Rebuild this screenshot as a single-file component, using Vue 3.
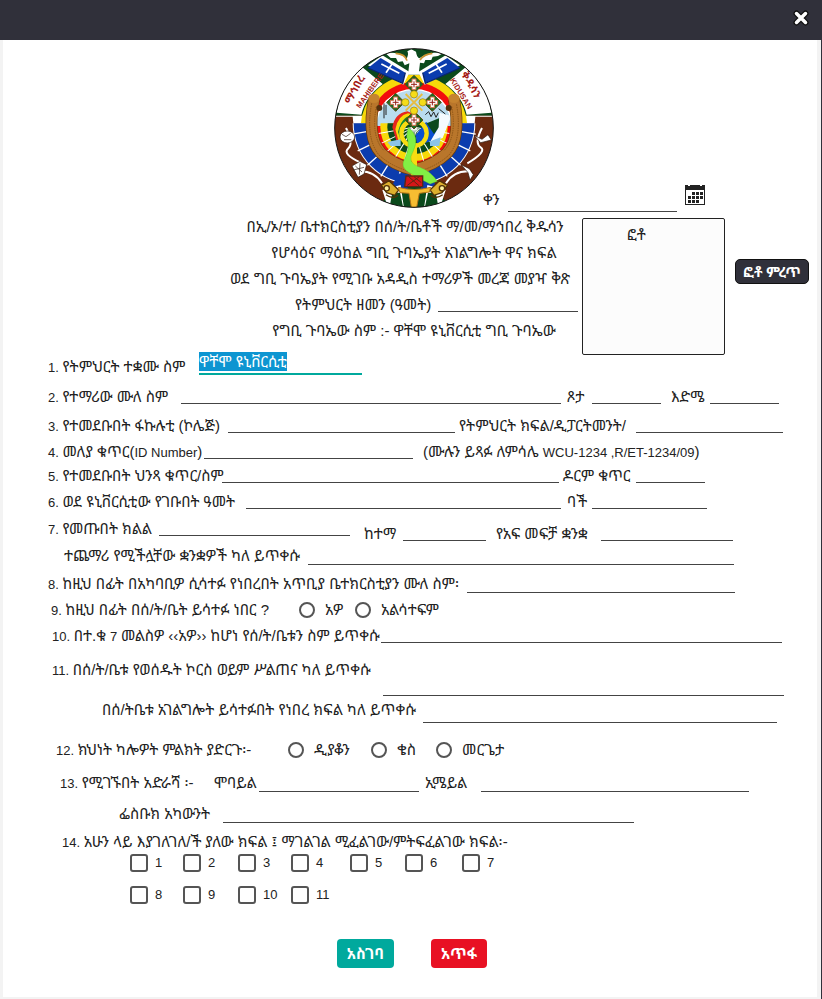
<script setup>
import { h, onMounted, reactive, ref } from 'vue'

const values = reactive({ school: 'ዋቸሞ ዩኒቨርሲቲ' })
const served = ref('')
const rank = ref('')
const groups = ref([])
const root = ref(null)

// Latin letters and digits are set one step smaller than the Ethiopic text.
const Mixed = (props) =>
  props.text
    .split(/([A-Za-z0-9][A-Za-z0-9 ,./-]*)/)
    .filter(Boolean)
    .map((part) => (/^[A-Za-z0-9]/.test(part) ? h('span', { 'data-latin': '' }, part) : part))
Mixed.props = ['text']

const L = (text, id, cls = '') => ({ text, id, cls })
const I = (id, cls = '') => ({ input: true, id, cls })

const upper = [
  { cls: 'r1', cells: [L('1. የትምህርት ተቋሙ ስም', 'school'), I('school', 'active')] },
  { cls: 'r2', cells: [L('2. የተማሪው ሙለ ስም', 'name'), I('name'), L('ጾታ', 'sex', 'in6'), I('sex'), L('እድሜ', 'age', 'in10'), I('age')] },
  { cls: 'r3', cells: [L('3. የተመደቡበት ፋኩሉቲ (ኮሌጅ)', 'faculty'), I('faculty'), L('የትምህርት ክፍል/ዲፓርትመንት/', 'dept', 'in4'), I('dept')] },
  { cls: 'r4', cells: [L('4. መለያ ቁጥር(ID Number)', 'idno'), I('idno'), L('(ሙሉን ይጻፉ ለምሳሌ WCU-1234 ,R/ET-1234/09)', 'idno', 'in10')] },
  { cls: 'r5', cells: [L('5. የተመደቡበት ህንጻ ቁጥር/ስም', 'block'), I('block'), L('ዶርም ቁጥር', 'dorm', 'in4'), I('dorm')] },
  { cls: 'r6', cells: [L('6. ወደ ዩኒቨርሲቲው የገቡበት ዓመት', 'year'), I('year'), L('ባች', 'batch', 'in6'), I('batch')] },
  { cls: 'r7', cells: [L('7. የመጡበት ክልል', 'region'), I('region'), L('ከተማ', 'city', 'in14 low'), I('city', 'low'), L('የአፍ መፍቻ ቋንቋ', 'tongue', 'in10 low'), I('tongue', 'low')] },
  { cls: 'r7b', cells: [L('ተጨማሪ የሚችሏቸው ቋንቋዎች ካለ ይጥቀሱ', 'langs'), I('langs', 'mid')] },
  { cls: 'r8', cells: [L('8. ከዚህ በፊት በአካባቢዎ ሲሳተፉ የነበረበት አጥቢያ ቤተክርስቲያን ሙለ ስም፡', 'church'), I('church', 'mid')] }
]
const middle = [
  { cls: 'r10', cells: [L('10. በተ.ቁ 7 መልስዎ ‹‹አዎ›› ከሆነ የሰ/ት/ቤቱን ስም ይጥቀሱ', 'sunday'), I('sunday')] },
  { cls: 'r11', cells: [L('11. በሰ/ት/ቤቱ የወሰዱት ኮርስ ወይም ሥልጠና ካለ ይጥቀሱ', 'course'), I('course', 'far')] },
  { cls: 'r11b', cells: [L('በሰ/ትቤቱ አገልግሎት ይሳተፉበት የነበረ ክፍል ካለ ይጥቀሱ', 'service'), I('service', 'deep')] }
]
const lower = [
  { cls: 'r13', cells: [L('13. የሚገኙበት አድራሻ ፡-', 'mobile'), L('ሞባይል', 'mobile'), I('mobile', 'mid'), L('ኢሜይል', 'email', 'in6'), I('email', 'mid')] },
  { cls: 'r13b', cells: [L('ፌስቡክ አካውንት', 'facebook'), I('facebook', 'mid')] }
]
const numbers = [1, 2, 3, 4, 5, 6, 7, 8, 9, 10, 11]
const diamonds = [[270, 133], [215, 187], [325, 187], [270, 240]]
const rays = [-80, -64, -48, -32, -16, 0, 16, 32, 48, 64, 80]
const dots = [[8, 8], [12, 8], [16, 8], [4, 12], [8, 12], [12, 12], [16, 12], [4, 16], [8, 16], [12, 16]]

onMounted(() => {
  const el = root.value.querySelector('#school')
  el.focus()
  el.select()
})
</script>

<template>
  <div ref="root" class="window">
    <header class="bar">
      <button class="close" type="button" aria-label="Close">
        <svg viewBox="0 0 18 18" width="18" height="18">
          <path d="M4.500 4.500 13.500 13.500M13.500 4.500 4.500 13.500" stroke="#111" stroke-width="6" stroke-linecap="round" />
          <path d="M4.500 4.500 13.500 13.500M13.500 4.500 4.500 13.500" stroke="#fff" stroke-width="3.500" stroke-linecap="round" />
        </svg>
      </button>
    </header>

    <form class="sheet" @submit.prevent>
      <div class="top">
        <svg class="logo" viewBox="30 24 480 480">
          <defs>
            <clipPath id="disc"><circle cx="270" cy="264" r="238" /></clipPath>
            <clipPath id="lowerhalf"><rect x="30" y="250" width="480" height="260" /></clipPath>
            <clipPath id="upperhalf"><rect x="30" y="20" width="480" height="230" /></clipPath>
            <clipPath id="core"><circle cx="270" cy="262" r="112" /></clipPath>
          </defs>
          <g clip-path="url(#disc)">
            <rect x="30" y="24" width="480" height="480" fill="#6b2a10" />
            <rect x="30" y="24" width="480" height="203" fill="#0b4a1c" />
            <path d="M38 218Q48 140 108 76L176 132Q124 170 112 224Z" fill="#fff" />
            <path d="M502 218Q492 140 432 76L364 132Q416 170 428 224Z" fill="#fff" />
            <path d="M30 227H126V250H88L86 230H30ZM510 227H414V250H452L454 230H510Z" fill="#fff" />
            <g clip-path="url(#upperhalf)">
              <circle cx="270" cy="264" r="160" fill="#f7d90a" />
              <circle cx="270" cy="264" r="137" fill="#f20d0d" />
              <circle cx="270" cy="264" r="118" fill="#fff" />
            </g>
            <g clip-path="url(#lowerhalf)">
              <circle cx="270" cy="250" r="184" fill="#fff" />
              <circle cx="270" cy="250" r="181" fill="#0b3cae" />
              <path v-for="a in rays" :key="a" d="M270 250V438" :transform="`rotate(${a} 270 250)`" stroke="#fff" stroke-width="4" />
              <circle cx="270" cy="250" r="122" fill="#f20d0d" />
            </g>
            <g clip-path="url(#core)">
              <rect x="150" y="140" width="240" height="120" fill="#b9dcef" />
              <path d="M158 258H382V380H158Z" fill="#f20d0d" />
              <circle cx="270" cy="262" r="101" fill="#f7d90a" clip-path="url(#lowerhalf)" />
              <circle cx="270" cy="262" r="80" fill="#0b4a1c" clip-path="url(#lowerhalf)" />
              <path v-for="a in rays" :key="'c' + a" d="M270 262V370" :transform="`rotate(${a} 270 262)`" stroke="#fff" stroke-width="3" />
              <path d="M205 262Q212 220 250 214L276 224Q232 238 222 318Z" fill="#e6271f" />
              <path d="M214 268Q222 226 252 220L272 226Q236 240 226 312Z" fill="#f7d90a" />
              <path d="M222 276Q232 232 262 226Q238 250 232 306Z" fill="#128a35" />
              <path d="M275 285 306 246 334 262 346 288 318 304 280 318Z" fill="#0b4fd0" />
              <path d="M308 250 352 232 346 260 330 282Z" fill="#0b4a1c" />
              <path d="M346 218 382 228 356 294 318 306 344 262Z" fill="#f5fbff" />
              <path d="M190 306 230 298V318H200ZM318 304 350 292 346 318H318Z" fill="#8cc4e8" />
            </g>
            <path d="M150 178Q128 292 170 338Q206 374 270 390Q334 374 370 338Q412 292 390 178" fill="none" stroke="#6a3d08" stroke-width="36" />
            <path d="M150 178Q128 292 170 338Q206 374 270 390Q334 374 370 338Q412 292 390 178" fill="none" stroke="#b9762b" stroke-width="32" />
            <path d="M143 190Q124 292 164 344Q204 382 270 398Q336 382 376 344Q416 292 397 190M157 200Q140 290 180 332M383 200Q400 290 360 332" fill="none" stroke="#8b5417" stroke-width="3" stroke-dasharray="4 3" />
            <ellipse cx="150" cy="175" rx="17" ry="14" fill="#c5832f" /><ellipse cx="390" cy="175" rx="17" ry="14" fill="#c5832f" />
            <circle cx="166" cy="204" r="9" fill="#54300c" /><circle cx="374" cy="204" r="9" fill="#54300c" />
            <path d="M180 190V235M186 195V225" stroke="#222" stroke-width="3" />
            <path d="M132 76 175 46 257 96 238 134Z" fill="#fff" /><path d="M132 84 170 54 244 98 236 130Z" fill="#0b3cae" /><path d="M132 84 236 130 244 98" fill="none" stroke="#09256d" stroke-width="4" />
            <path d="M408 76 365 46 283 96 302 134Z" fill="#fff" /><path d="M408 84 370 54 296 98 304 130Z" fill="#0b3cae" /><path d="M408 84 304 130 296 98" fill="none" stroke="#09256d" stroke-width="4" />
            <path d="M172 72 226 100M204 72 186 98M368 72 314 100M336 72 354 98" stroke="#fff" stroke-width="5" />
            <path d="M183 38Q230 35 248 56Q255 42 250 34L262 28 276 35Q278 50 286 55Q315 34 360 38L342 48 326 50 322 60 304 60 300 70 288 68 285 94 292 104H252L256 70 242 76 236 64 222 66 216 54 200 54Z" fill="#fff" />
            <path d="M215 40Q244 42 249 62M325 40Q300 42 288 60" fill="none" stroke="#c8912f" stroke-width="5" />
            <path d="M66 264Q90 310 72 326T110 368M474 264Q450 310 470 322T430 370M100 394Q150 390 174 430M440 394Q390 390 366 430" fill="none" stroke="#fff" stroke-width="6" />
            <g fill="#fff" stroke="#2b160d" stroke-width="2">
              <ellipse cx="70" cy="291" rx="22" ry="18" /><path d="M54 283 66 290 80 280M60 299H82" />
              <path d="M84 378 108 364 128 374 120 402 102 412Z" /><path d="M94 378 114 396M108 370 106 404M88 390 120 382" />
              <path d="M450 286 470 308 502 300 492 284 474 298Z" /><path d="M412 374 432 398 438 420 448 404 436 386Z" />
            </g>
            <path d="M160 504 222 430H320L382 504Z" fill="#0b4a1c" />
            <path d="M198 448 224 400 242 406 252 448ZM342 448 316 400 300 406 290 448Z" fill="#0b3cae" />
            <path d="M175 450 230 435 240 504H192ZM365 450 310 435 300 504H348Z" fill="#fff" />
            <path d="M205 458H228L238 504H196ZM335 458H312L302 504H344Z" fill="#0b4a1c" />
            <g fill="#ddb02e" stroke="#513208" stroke-width="4">
              <path d="M172 436 195 422 224 450 212 466 188 458ZM370 436 346 422 318 450 330 466 354 458Z" />
              <path d="M186 464Q208 480 222 466M356 464Q334 480 320 466" fill="none" />
              <circle cx="188" cy="445" r="8" fill="#fff2a0" /><circle cx="354" cy="445" r="8" fill="#fff2a0" />
            </g>
            <circle cx="270" cy="280" r="38" fill="none" stroke="#f7dc12" stroke-width="13" />
            <path d="M262 310V410H279V310Z" fill="#f7dc12" />
            <path d="M252 262Q290 290 267 335Q246 368 288 382Q320 394 340 424L318 432Q290 418 256 398Q226 382 243 354Q260 318 248 290Z" fill="#82f044" stroke="#51be28" />
            <path d="M246 408H296V440H242Z" fill="#d51618" stroke="#5d2712" stroke-width="4" />
            <path d="M254 410 286 438M270 410 292 428M286 410 250 436" stroke="#5d2712" stroke-width="3" />
            <path d="M223 442Q270 455 320 442L316 456 286 460 278 502H262L255 460 228 458Z" fill="#f6bd32" stroke="#b47316" stroke-width="3" />
            <g v-for="d in diamonds" :key="d.join()" :transform="`translate(${d[0]} ${d[1]})`">
              <path d="M0-27 27 0 0 27-27 0Z" fill="#186b23" stroke="#5b4a12" stroke-width="3" />
              <path d="M-6-16H6V-6H16V6H6V16H-6V6H-16V-6H-6Z" fill="#fff" stroke="#d66d48" stroke-width="3" />
              <path d="M0-9V9M-9 0H9" stroke="#982019" stroke-width="3" />
            </g>
            <path d="M245 162 295 212M295 162 245 212" stroke="#e6bd45" stroke-width="6" />
            <g fill="#f5dc19" stroke="#9b7d11" stroke-width="2">
              <circle cx="270" cy="163" r="11" /><circle cx="244" cy="187" r="11" /><circle cx="296" cy="187" r="11" /><circle cx="270" cy="212" r="11" />
            </g>
            <path d="M304 224 314 215 321 230 329 216 336 232 343 218M344 206 364 222" stroke="#222" stroke-width="3" fill="none" />
            <g class="seal">
              <text transform="translate(80 194) rotate(-62)" font-size="32">ማኅበረ</text>
              <text transform="translate(108 206) rotate(-54)" font-size="23">MAHIBERE</text>
              <text transform="translate(377 120) rotate(58)" font-size="23">KIDUSAN</text>
              <text transform="translate(410 102) rotate(60)" font-size="32">ቅዱሳን</text>
            </g>
          </g>
          <circle cx="270" cy="264" r="238" fill="none" stroke="#151515" stroke-width="3" />
        </svg>
        <div class="date">
          <label for="date">ቀን</label>
          <input id="date" type="text" />
          <button class="cal" type="button" aria-label="Calendar">
            <svg viewBox="0 0 20 20" width="20" height="20">
              <path d="M0 0H20V20H0Z" fill="#222" /><path d="M1 5H19V19H1Z" fill="#fff" />
              <path d="M3 0H5V1H3ZM15 0H17V1H15Z" fill="#fff" />
              <rect v-for="p in dots" :key="p.join()" :x="p[0] - 1" :y="p[1] - 1" width="3" height="3" fill="#222" />
            </svg>
          </button>
        </div>
      </div>

      <div class="intro">
        <div class="titles">
          <p>በኢ/ኦ/ተ/ ቤተክርስቲያን በሰ/ት/ቤቶች ማ/መ/ማኅበረ ቅዱሳን</p>
          <p class="shift">የሆሳዕና ማዕከል ግቢ ጉባኤያት አገልግሎት ዋና ክፍል</p>
          <p class="back">ወደ ግቢ ጉባኤያት የሚገቡ አዳዲስ ተማሪዎች መረጃ መያዣ ቅጽ</p>
          <div class="term"><label for="term">የትምህርት ዘመን (ዓመት)</label><input id="term" type="text" /></div>
          <p class="shift">የግቢ ጉባኤው ስም :- ዋቸሞ ዩኒቨርሲቲ ግቢ ጉባኤው</p>
        </div>
        <div class="photo">ፎቶ</div>
        <button class="pick" type="button">ፎቶ ምረጥ</button>
      </div>

      <div v-for="row in upper" :key="row.cls" class="row" :class="row.cls">
        <template v-for="(c, i) in row.cells" :key="i">
          <input v-if="c.input" :id="c.id" v-model="values[c.id]" type="text" :class="c.cls" />
          <label v-else :for="c.id" :class="c.cls"><Mixed :text="c.text" /></label>
        </template>
      </div>

      <div class="row r9" role="radiogroup" aria-labelledby="q9">
        <span id="q9"><Mixed text="9. ከዚህ በፊት በሰ/ት/ቤት ይሳተፉ ነበር ?" /></span>
        <label class="opt"><input v-model="served" type="radio" name="served" value="yes" />አዎ</label>
        <label class="opt"><input v-model="served" type="radio" name="served" value="no" />አልሳተፍም</label>
      </div>

      <div v-for="row in middle" :key="row.cls" class="row" :class="row.cls">
        <template v-for="(c, i) in row.cells" :key="i">
          <input v-if="c.input" :id="c.id" v-model="values[c.id]" type="text" :class="c.cls" />
          <label v-else :for="c.id" :class="c.cls"><Mixed :text="c.text" /></label>
        </template>
      </div>

      <div class="row r12" role="radiogroup" aria-labelledby="q12">
        <span id="q12"><Mixed text="12. ክህነት ካሎዎት ምልክት ያድርጉ፡-" /></span>
        <label class="opt"><input v-model="rank" type="radio" name="rank" value="deacon" />ዲያቆን</label>
        <label class="opt"><input v-model="rank" type="radio" name="rank" value="priest" />ቄስ</label>
        <label class="opt"><input v-model="rank" type="radio" name="rank" value="merigeta" />መርጌታ</label>
      </div>

      <div v-for="row in lower" :key="row.cls" class="row" :class="row.cls">
        <template v-for="(c, i) in row.cells" :key="i">
          <input v-if="c.input" :id="c.id" v-model="values[c.id]" type="text" :class="c.cls" />
          <label v-else :for="c.id" :class="c.cls"><Mixed :text="c.text" /></label>
        </template>
      </div>

      <div class="row r14"><span><Mixed text="14. አሁን ላይ እያገለገለ/ች ያለው ክፍል ፤ ማገልገል ሚፈልገው/ምትፍፈልገው ክፍል፡-" /></span></div>
      <div class="checks">
        <label v-for="n in numbers" :key="n"><input v-model="groups" type="checkbox" :value="n" />{{ n }}</label>
      </div>

      <div class="actions">
        <button class="save" type="submit">አስገባ</button>
        <button class="clear" type="reset">አጥፋ</button>
      </div>
    </form>
  </div>
</template>

<style>
body { margin: 0; background: #f3f3f3; }
</style>

<style scoped>
.window {
  box-sizing: border-box;
  min-height: 100vh;
  background: #f3f3f3;
  border-right: 1px solid #30303a;
  color: #222;
  font: 15px/20px "Liberation Sans", "Noto Sans Ethiopic", "Abyssinica SIL", sans-serif;
}
:deep([data-latin]) { font-size: 13px; white-space: pre; }
.bar { display: flex; justify-content: flex-end; align-items: center; height: 40px; padding: 0 11px; background: #30303a; }
.close { display: flex; padding: 0; border: 0; background: none; margin-bottom: 4px; }
.sheet { margin: 0 4px 0 3px; padding-bottom: 29px; background: #fff; }
button { font: inherit; }
input { box-sizing: border-box; margin: 0; font: inherit; }
input[type="text"] {
  width: 100%;
  min-width: 0;
  height: 14px;
  padding: 0;
  border: 0;
  border-bottom: 1px solid #444;
  border-radius: 0;
  outline: 0;
  background: transparent;
  color: #222;
}
input[type="text"].mid { height: 18px; }
input[type="text"].low { height: 24px; }
input[type="text"].deep { height: 26px; }
input[type="text"].far { height: 52px; }
input[type="text"].active { height: 23px; padding-bottom: 4px; border-bottom: 2px solid #00a99d; align-self: start; }
input::selection { background: #0d95d1; color: #fff; }

.top { display: grid; grid-template-columns: 331fr 160px 323fr; padding-top: 8px; }
.logo { display: block; grid-column: 2; width: 160px; height: 160px; }
.seal { fill: #a51a14; font-weight: 700; }
.date { grid-column: 3; display: grid; grid-template-columns: 25px 169fr 8px 20px 112fr; align-items: end; margin: 0 0 -4px -11px; }
.date label { padding-bottom: 2px; }
.date input { grid-column: 2; }
.cal { grid-column: 4; display: flex; padding: 0; border: 0; background: none; margin-bottom: 7px; }

.intro { display: grid; grid-template-columns: 225fr 354px 143px 84px 8fr; align-items: start; padding-top: 6px; }
.titles { grid-column: 2; }
.titles p { display: flex; align-items: center; justify-content: center; height: 26px; margin: 0; white-space: nowrap; }
.titles .shift { padding-left: 18px; }
.titles .back { padding-right: 10px; }
.term { display: grid; grid-template-columns: 143px 1fr; align-items: center; height: 26px; padding: 0 4px 0 67px; white-space: nowrap; }
.photo { box-sizing: border-box; height: 137px; margin: 4px 0 -3px; padding: 6px 0 0 44px; border: 1px solid #222; border-radius: 2px; background: #fcfcfc; }
.pick { height: 25px; margin: 45px 0 0 10px; padding: 0; border: 1px solid #111; border-radius: 5px; background: #30303a; color: #fff; font-size: 14px; font-weight: 700; white-space: nowrap; }

.row { display: grid; grid-template-rows: 100%; align-items: center; height: 28px; padding-left: 45px; white-space: nowrap; }
.in4 { padding-left: 4px; }
.in6 { padding-left: 6px; }
.in10 { padding-left: 10px; }
.in14 { padding-left: 14px; }
label.low { padding-top: 10px; }
.r1 { height: 30px; grid-template-columns: 151px 163fr 455fr; }
.r2 { height: 30px; grid-template-columns: 133px 380fr 31px 69fr 49px 69fr 38fr; }
.r3 { grid-template-columns: 180px 227fr 181px 147fr 34fr; }
.r4 { height: 24px; grid-template-columns: 156px 209fr 290px 114fr; }
.r5 { height: 24px; grid-template-columns: 174px 337fr 77px 69fr 112fr; }
.r6 { grid-template-columns: 198px 315fr 31px 115fr 110fr; }
.r7 { height: 26px; grid-template-columns: 111px 191fr 53px 83fr 115px 132fr 84fr; }
.r7b { padding-left: 61px; grid-template-columns: 244px 426fr 83fr; }
.r8 { grid-template-columns: 419px 268fr 82fr; }
.r9 { height: 24px; padding-left: 48px; grid-template-columns: 248px 56px 1fr; }
.r10 { padding-left: 49px; grid-template-columns: 329px 401fr 35fr; }
.r11 { height: 40px; padding-left: 49px; grid-template-columns: 331px 401fr 33fr; }
.r11b { height: 40px; padding-left: 99px; grid-template-columns: 321px 354fr 40fr; }
.r12 { height: 40px; padding-left: 53px; grid-template-columns: 232px 83px 65px 1fr; }
.r13 { height: 26px; padding-left: 57px; grid-template-columns: 154px 45px 160fr 62px 268fr 68fr; }
.r13b { height: 36px; padding-left: 116px; grid-template-columns: 104px 411fr 183fr; }
.r14 { height: 20px; padding-left: 59px; }

.opt { display: flex; align-items: center; gap: 10px; }
input[type="radio"], input[type="checkbox"] { flex: none; appearance: none; width: 16px; height: 16px; border: 2px solid #555; border-radius: 50%; background: #fff; }
input[type="radio"]:checked, input[type="checkbox"]:checked { background: #00a99d; }
.checks { display: grid; grid-template-columns: 53px 55px 53px 59px 55px 57px 1fr; row-gap: 12px; padding: 1px 0 0 127px; font-size: 13px; }
.checks label { display: flex; align-items: center; gap: 7px; }
input[type="checkbox"] { width: 18px; height: 18px; border-radius: 3px; }
.actions { display: flex; justify-content: center; gap: 37px; padding: 34px 0 0 4px; }
.actions button { height: 29px; padding: 0 10px; border: 0; border-radius: 4px; color: #fff; font-size: 15px; font-weight: 700; }
.save { background: #00a99d; }
.clear { background: #e81123; }
</style>
